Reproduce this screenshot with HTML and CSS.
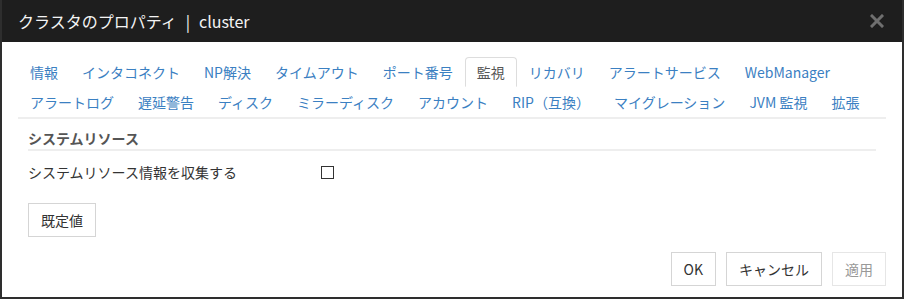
FILE: index.html
```html
<!DOCTYPE html>
<html lang="ja">
<head>
  <meta charset="UTF-8" />
  <title>クラスタのプロパティ</title>
  <link rel="stylesheet" href="styles.css">
</head>
<body>

<div class="dialog">
  <div class="dialog-title">
    <span>クラスタのプロパティ<span class="sep">|</span>cluster</span>
    <svg class="close" width="14" height="14" viewBox="0 0 14 14">
      <path d="M2 2 L12 12 M12 2 L2 12" stroke="#6f6f6f" stroke-width="3" stroke-linecap="square" fill="none"/>
    </svg>
  </div>

  <div class="dialog-body">
    <ul class="tabs">
      <li><a>情報</a></li>
      <li><a>インタコネクト</a></li>
      <li><a>NP解決</a></li>
      <li><a>タイムアウト</a></li>
      <li><a>ポート番号</a></li>
      <li class="active"><a>監視</a></li>
      <li><a>リカバリ</a></li>
      <li><a>アラートサービス</a></li>
      <li><a>WebManager</a></li>
      <li><a>アラートログ</a></li>
      <li><a>遅延警告</a></li>
      <li><a>ディスク</a></li>
      <li><a>ミラーディスク</a></li>
      <li><a>アカウント</a></li>
      <li><a>RIP（互換）</a></li>
      <li><a>マイグレーション</a></li>
      <li><a>JVM 監視</a></li>
      <li><a>拡張</a></li>
    </ul>

    <div class="panel">
      <h3 class="section">システムリソース</h3>
      <div class="field">
        <label class="field-label">システムリソース情報を収集する</label>
        <span class="checkbox"></span>
      </div>
      <button class="btn">既定値</button>
    </div>

    <div class="footer">
      <button class="btn">OK</button>
      <button class="btn">キャンセル</button>
      <button class="btn disabled">適用</button>
    </div>
  </div>
</div>

</body>
</html>
```

FILE: styles.css
```css
/* Cluster properties dialog */
:root {
  --title-bg: #1e1e1e;
  --frame: #2e2e2e;
  --link: #3b80c2;
  --text: #333;
  --line: #eee;
  --font: 'Noto Sans CJK JP', 'Noto Sans', sans-serif;
}

* {
  box-sizing: border-box;
  margin: 0;
  padding: 0;
  font-family: var(--font);
}

body {
  background: #fff;
  color: var(--text);
  font-size: 14px;
}

.dialog {
  width: 904px;
  height: 299px;
  border: 2px solid var(--frame);
  border-top: none;
  display: flex;
  flex-direction: column;
}

.dialog-title {
  background: var(--title-bg);
  height: 42px;
  padding: 0 18px 0 16px;
  display: flex;
  justify-content: space-between;
  align-items: center;
  color: #f4f4f4;
  font-size: 16px;
}

.sep {
  margin: 0 9px;
}

.close {
  display: block;
}

.dialog-body {
  flex: 1;
  padding: 15px 16px 11px 16px;
  display: flex;
  flex-direction: column;
}

.tabs {
  list-style: none;
  display: flex;
  flex-wrap: wrap;
  border-bottom: 2px solid var(--line);
}

.tabs li a {
  display: block;
  padding: 4px 11px;
  line-height: 20px;
  border: 1px solid transparent;
  border-radius: 4px 4px 0 0;
  color: var(--link);
  white-space: nowrap;
}

.tabs li.active a {
  color: #555;
  border-color: #ddd;
  border-bottom-color: #fff;
}

.panel {
  padding: 9px 10px 0 10px;
}

.section {
  font-size: 14px;
  font-weight: bold;
  color: #555;
  line-height: 20px;
  border-bottom: 2px solid var(--line);
  padding-bottom: 1px;
}

.field {
  display: flex;
  align-items: center;
  margin-top: 11px;
  line-height: 20px;
}

.field-label {
  width: 293px;
}

.checkbox {
  width: 13px;
  height: 13px;
  border: 1px solid #333;
  background: #fff;
}

.btn {
  background: #fff;
  border: 1px solid #d5d5d5;
  color: var(--text);
  font-size: 14px;
  height: 34px;
  padding: 0 12px;
  cursor: pointer;
}

.panel .btn {
  margin-top: 21px;
}

.btn.disabled {
  color: #999;
  border-color: #e6e6e6;
}

.footer {
  margin-top: auto;
  display: flex;
  justify-content: flex-end;
  gap: 10px;
}
```
